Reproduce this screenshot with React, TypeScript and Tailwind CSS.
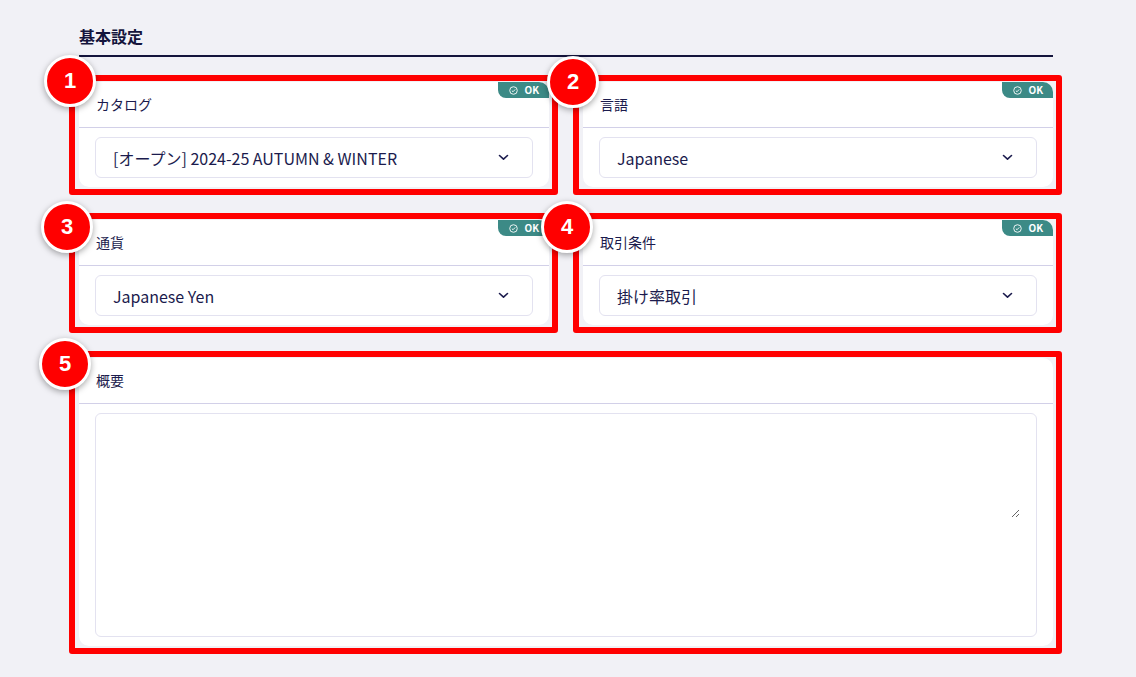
import React from "react";

const FONT = "font-['Noto_Sans_CJK_JP','Noto_Sans',sans-serif]";

const Marker = ({ n, pos }: { n: number; pos: string }) => (
    <div className={`absolute ${pos} z-20 w-[52px] h-[52px] rounded-full bg-[#ff0000] border-[3px] border-white shadow-[0_2px_6px_rgba(0,0,0,0.35)] flex items-center justify-center`}>
        <span className="text-white text-[22px] font-bold font-['Liberation_Sans',sans-serif] leading-none">{n}</span>
    </div>
);

const OkBadge = () => (
    <div className="absolute top-0 right-0 h-[16px] pl-[11px] pr-[10px] bg-[#3c8a86] rounded-tr-[10px] rounded-bl-[8px] flex items-center gap-[6px] text-white">
        <svg width="9" height="9" viewBox="0 0 10 10" fill="none" stroke="currentColor" strokeWidth="1">
            <circle cx="5" cy="5" r="4.2" />
            <path d="M3.2 5.2 L4.5 6.4 L6.9 3.8" />
        </svg>
        <span className="text-[10px] font-bold leading-none">OK</span>
    </div>
);

const Chevron = () => (
    <svg width="11" height="7" viewBox="0 0 11 7" fill="none" stroke="#1b1b4d" strokeWidth="1.6" strokeLinecap="round" strokeLinejoin="round">
        <path d="M1.5 1.5 L5.5 5.2 L9.5 1.5" />
    </svg>
);

type CardProps = {
    n: number
    label: string
    marker: string
    ok?: boolean
    children: React.ReactNode
}

const Card = ({ n, label, marker, ok = true, children }: CardProps) => (
    <div className="relative bg-white rounded-[10px]">
        <div className="pointer-events-none absolute -left-[10px] -top-[7px] -right-[9px] -bottom-[8px] border-[6px] border-[#ff0000] rounded-[3px] z-10" />
        <Marker n={n} pos={marker} />
        {ok ? <OkBadge /> : null}
        <div className="h-[46px] px-[17px] flex items-center border-b border-[#d2d0e8] text-[14px] text-[#1b1b4d]">{label}</div>
        <div className="px-[16px] py-[9px]">{children}</div>
    </div>
);

const Select = ({ value }: { value: string }) => (
    <div className="h-[41px] border border-[#e3e2f0] rounded-[6px] flex items-center justify-between pl-[17px] pr-[23px] text-[16px] text-[#1b1b4d]">
        <span>{value}</span>
        <Chevron />
    </div>
);

export default function App() {
    return (
        <div className={`min-h-screen bg-[#f1f1f6] ${FONT}`}>
            <div className="ml-[79px] w-[974px] pt-[25px] pb-[30px]">
                <h2 className="text-[16px] leading-[22px] font-bold text-[#14143c] pb-[8px] border-b-2 border-[#14143c]">基本設定</h2>
                <div className="grid grid-cols-2 gap-x-[34px] gap-y-[33px] mt-[25px]">
                    <Card n={1} label="カタログ" marker="-left-[35px] -top-[27px]">
                        <Select value="[オープン] 2024-25 AUTUMN & WINTER" />
                    </Card>
                    <Card n={2} label="言語" marker="-left-[36px] -top-[26px]">
                        <Select value="Japanese" />
                    </Card>
                    <Card n={3} label="通貨" marker="-left-[38px] -top-[19px]">
                        <Select value="Japanese Yen" />
                    </Card>
                    <Card n={4} label="取引条件" marker="-left-[42px] -top-[19px]">
                        <Select value="掛け率取引" />
                    </Card>
                </div>
                <div className="mt-[33px]">
                    <Card n={5} label="概要" marker="-left-[40px] -top-[20px]" ok={false}>
                        <div className="h-[224px] border border-[#e3e2f0] rounded-[6px] p-[16px]">
                            <textarea className="block w-full h-[88px] resize-y outline-none bg-transparent text-[14px] text-[#1b1b4d]" />
                        </div>
                    </Card>
                </div>
            </div>
        </div>
    );
}
